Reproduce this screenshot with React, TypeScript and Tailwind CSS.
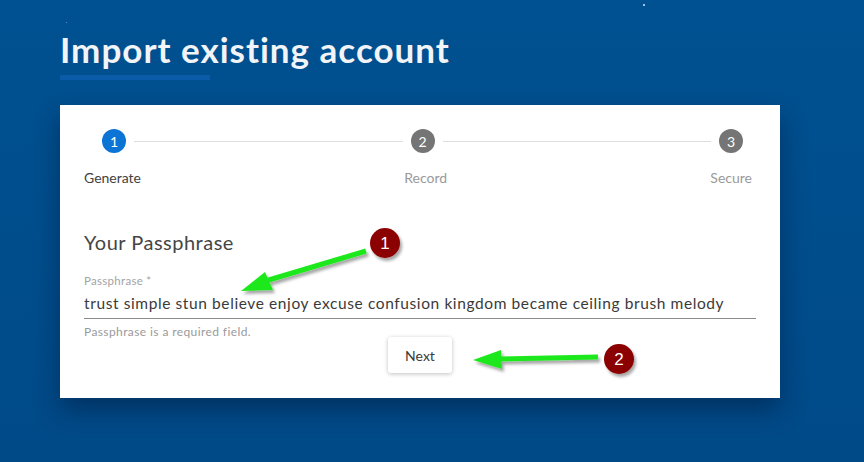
import React from 'react';

const steps = [
  { n: 1, label: 'Generate', active: true },
  { n: 2, label: 'Record', active: false },
  { n: 3, label: 'Secure', active: false },
];

function StepCircle({ n, active }: { n: number; active: boolean }) {
  return (
    <div
      className={`w-6 h-6 rounded-full flex items-center justify-center text-white text-[14px] shrink-0 ${
        active ? 'bg-[#0c74d5]' : 'bg-[#757575]'
      }`}
    >
      {n}
    </div>
  );
}

function Annotations() {
  return (
    <svg
      className="absolute inset-0 pointer-events-none"
      width={864}
      height={462}
      viewBox="0 0 864 462"
    >
      <defs>
        <filter id="sh" x="-20%" y="-20%" width="140%" height="160%">
          <feDropShadow dx="2" dy="3" stdDeviation="1.6" floodColor="#000" floodOpacity="0.35" />
        </filter>
      </defs>
      {/* arrow 1 */}
      <g filter="url(#sh)">
        <line x1="366" y1="251" x2="262" y2="282" stroke="#1ee81e" strokeWidth="5" />
        <polygon points="241,291 265,272 273,290" fill="#1ee81e" />
      </g>
      <circle cx="385" cy="243" r="15" fill="#8b0000" filter="url(#sh)" />
      <text x="385" y="249" textAnchor="middle" fill="#fff" fontSize="17" fontFamily="Liberation Sans, sans-serif">
        1
      </text>
      {/* arrow 2 */}
      <g filter="url(#sh)">
        <line x1="598" y1="357" x2="495" y2="359" stroke="#1ee81e" strokeWidth="5" />
        <polygon points="473,360 501,350 502,369" fill="#1ee81e" />
      </g>
      <circle cx="619" cy="359" r="15" fill="#8b0000" filter="url(#sh)" />
      <text x="619" y="365" textAnchor="middle" fill="#fff" fontSize="17" fontFamily="Liberation Sans, sans-serif">
        2
      </text>
    </svg>
  );
}

export default function App() {
  return (
    <div
      className="relative w-[864px] h-[462px] overflow-hidden bg-gradient-to-b from-[#005191] to-[#004a88] px-[60px] pt-[27px]"
      style={{ fontFamily: 'Lato, "Open Sans", sans-serif' }}
    >
      {/* stars */}
      <div className="absolute left-[643px] top-[4px] w-[2px] h-[2px] bg-[#9cc3ea]" />
      <div className="absolute left-[66px] top-[22px] w-px h-px bg-[#5b8fc4]" />

      <h1 className="text-[35px] leading-[44px] font-bold text-[#f2f4f7] tracking-[1px]">
        Import existing account
      </h1>
      <div className="mt-[4px] w-[150px] h-[5px] bg-[#0a5ba8]" />

      <div className="mt-[25px] w-[720px] h-[293px] bg-white shadow-[0_12px_24px_rgba(0,20,50,0.45)] pl-6 pr-[28px] pt-6">
        {/* stepper */}
        <div className="flex items-center pl-[18px] pr-[9px]">
          <StepCircle n={1} active />
          <div className="flex-1 h-px bg-[#dedede] mx-2" />
          <StepCircle n={2} active={false} />
          <div className="flex-1 h-px bg-[#dedede] mx-2" />
          <StepCircle n={3} active={false} />
        </div>
        <div className="flex justify-between mt-[15px] text-[14px] leading-[20px]">
          {steps.map((s) => (
            <span key={s.n} className={s.active ? 'text-[#424242]' : 'text-[#9a9a9a]'}>
              {s.label}
            </span>
          ))}
        </div>

        <h2 className="mt-[41px] text-[20px] leading-[26px] text-[#454545] tracking-[0.5px]">
          Your Passphrase
        </h2>

        <div className="mt-[19px] mr-[-4px]">
          <div className="text-[11.5px] leading-[14px] text-[#a3a3a3] tracking-[0.3px]">Passphrase *</div>
          <div className="mt-[5px] pb-[5px] border-b border-[#8a8a8a] text-[15.5px] leading-[20px] text-[#3a3a3a] tracking-[0.6px]">
            trust simple stun believe enjoy excuse confusion kingdom became ceiling brush melody
          </div>
          <div className="mt-[6px] text-[12px] leading-[14px] text-[#9a9a9a] tracking-[0.4px]">
            Passphrase is a required field.
          </div>
        </div>

        <div className="flex justify-center mt-[-2px] pl-[4px]">
          <button className="w-16 h-9 bg-white rounded-[3px] shadow-[0_1px_4px_rgba(0,0,0,0.25)] text-[14px] text-[#3a3a3a]">
            Next
          </button>
        </div>
      </div>

      <Annotations />
    </div>
  );
}
